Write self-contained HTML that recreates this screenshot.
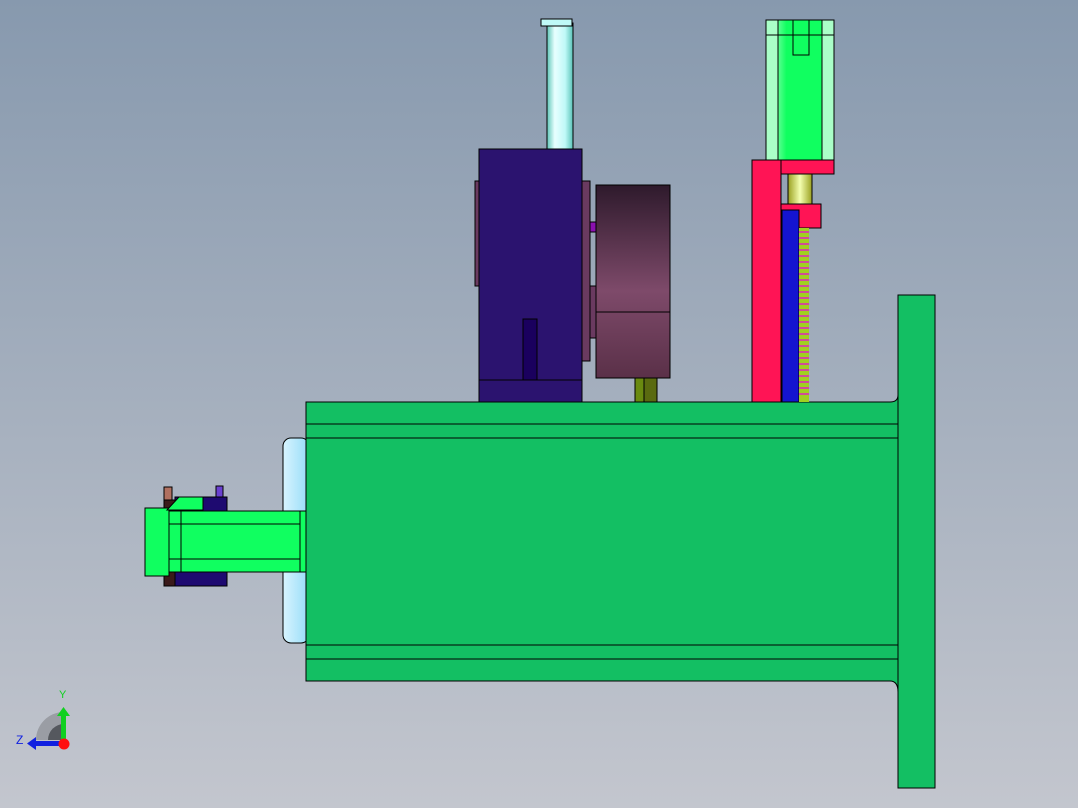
<!DOCTYPE html>
<html><head><style>html,body{margin:0;padding:0;width:1078px;height:808px;overflow:hidden}</style></head><body>
<svg width="1078" height="808" xmlns="http://www.w3.org/2000/svg" style="display:block">
<defs>
<linearGradient id="bg" x1="0" y1="0" x2="0" y2="1"><stop offset="0" stop-color="#8799ae"/><stop offset="1" stop-color="#c3c6ce"/></linearGradient>
<linearGradient id="drum" x1="0" y1="0" x2="0" y2="1"><stop offset="0" stop-color="#2e1a2c"/><stop offset="0.55" stop-color="#7e4a6a"/><stop offset="1" stop-color="#5a3048"/></linearGradient>
<linearGradient id="cyl" x1="0" y1="0" x2="1" y2="0"><stop offset="0" stop-color="#5fc6b8"/><stop offset="0.3" stop-color="#e8ffff"/><stop offset="0.7" stop-color="#bff9f7"/><stop offset="1" stop-color="#59c2b8"/></linearGradient>
<linearGradient id="lb" x1="0" y1="0" x2="1" y2="0"><stop offset="0" stop-color="#d8f4ff"/><stop offset="1" stop-color="#96dcf8"/></linearGradient>
<linearGradient id="mg" x1="0" y1="0" x2="1" y2="0"><stop offset="0" stop-color="#c8ffd8"/><stop offset="0.3" stop-color="#10ff60"/><stop offset="1" stop-color="#10ff60"/></linearGradient>
<linearGradient id="yel" x1="0" y1="0" x2="1" y2="0"><stop offset="0" stop-color="#9aa020"/><stop offset="0.5" stop-color="#f4ffb0"/><stop offset="1" stop-color="#9aa020"/></linearGradient>
</defs>
<rect width="1078" height="808" fill="url(#bg)"/>
<g stroke="#000" stroke-width="1">
<!-- main body -->
<rect x="283" y="438" width="26" height="205" rx="8" fill="url(#lb)"/>
<path d="M306 402H890Q898 402 898 395V692Q898 681 890 681H306Z" fill="#13bf63"/>
<line x1="306" y1="424" x2="898" y2="424"/><line x1="306" y1="438" x2="898" y2="438"/>
<line x1="306" y1="645" x2="898" y2="645"/><line x1="306" y1="659" x2="898" y2="659"/>
<rect x="898" y="295" width="37" height="493" fill="#13bf63"/>
<!-- left motor -->
<rect x="164" y="487" width="8" height="13" fill="#b07060"/>
<rect x="216" y="486" width="7" height="11" fill="#6a40d0"/>
<rect x="175" y="497" width="52" height="89" fill="#1e0a70"/>
<rect x="164" y="500" width="11" height="86" fill="#3a1a1a"/>
<rect x="145" y="508" width="24" height="68" fill="#10ff60"/>
<path d="M167 510L179 497H203V510Z" fill="#10ff60"/>
<rect x="169" y="511" width="137" height="61" fill="#10ff60"/>
<line x1="169" y1="524" x2="300" y2="524"/><line x1="169" y1="559" x2="300" y2="559"/>
<line x1="181" y1="511" x2="181" y2="572"/><line x1="300" y1="511" x2="300" y2="572"/>
<!-- cylinder -->
<rect x="547" y="23" width="26" height="126" fill="url(#cyl)"/>
<rect x="541" y="19" width="31" height="7" fill="#bff9f7"/>
<!-- blue box -->
<rect x="475" y="181" width="5" height="105" fill="#6a3a60"/>
<rect x="582" y="181" width="8" height="180" fill="#6a3a60"/>
<rect x="590" y="222" width="6" height="10" fill="#8a10b0"/>
<rect x="590" y="286" width="6" height="52" fill="#6a3a60"/>
<rect x="479" y="149" width="103" height="253" fill="#2b136f"/>
<line x1="479" y1="380" x2="582" y2="380"/>
<rect x="523" y="319" width="14" height="61" fill="#1a005e"/>
<rect x="596" y="185" width="74" height="193" fill="url(#drum)"/>
<line x1="596" y1="312" x2="670" y2="312"/>
<rect x="635" y="378" width="9" height="24" fill="#6a8a10"/>
<rect x="644" y="378" width="13" height="24" fill="#5a6a10"/>
<!-- right assembly -->
<rect x="766" y="20" width="68" height="140" fill="url(#mg)"/>
<rect x="766" y="20" width="12" height="140" fill="#aaffc8"/>
<rect x="822" y="20" width="12" height="140" fill="#aaffc8"/>
<rect x="793" y="20" width="16" height="35" fill="#10ff60"/>
<line x1="766" y1="35" x2="834" y2="35"/>
<rect x="788" y="174" width="24" height="30" fill="url(#yel)"/>
<rect x="752" y="160" width="29" height="242" fill="#ff1455"/>
<rect x="781" y="160" width="53" height="14" fill="#ff1455"/>
<rect x="781" y="204" width="40" height="24" fill="#ff1455"/>
<rect x="782" y="210" width="17" height="192" fill="#1414d0"/>
<rect x="799" y="228" width="10" height="174" fill="#a0d020" stroke="none"/>
</g>
<g stroke="#e020c0" stroke-width="1.5">
<path d="M799 232H809M799 238H809M799 244H809M799 250H809M799 256H809M799 262H809M799 268H809M799 274H809M799 280H809M799 286H809M799 292H809M799 298H809M799 304H809M799 310H809M799 316H809M799 322H809M799 328H809M799 334H809M799 340H809M799 346H809M799 352H809M799 358H809M799 364H809M799 370H809M799 376H809M799 382H809M799 388H809M799 394H809"/>
</g>
<!-- triad -->
<path d="M36 740A28 28 0 0 1 64 712V740Z" fill="#9a9da4"/>
<path d="M48 740A16 16 0 0 1 64 724V740Z" fill="#55585e"/>
<rect x="61" y="714" width="5" height="26" fill="#10d020"/>
<path d="M57 716L63.5 707L70 716Z" fill="#10d020"/>
<rect x="36" y="741" width="26" height="5" fill="#1020e0"/>
<path d="M36 737L27 743.5L36 750Z" fill="#1020e0"/>
<circle cx="64" cy="744" r="5.5" fill="#ff1010"/>
<text x="59" y="698" font-family="Liberation Sans, sans-serif" font-size="11" fill="#10d020">Y</text>
<text x="16" y="744" font-family="Liberation Sans, sans-serif" font-size="12" fill="#1020e0">Z</text>
</svg>
</body></html>
